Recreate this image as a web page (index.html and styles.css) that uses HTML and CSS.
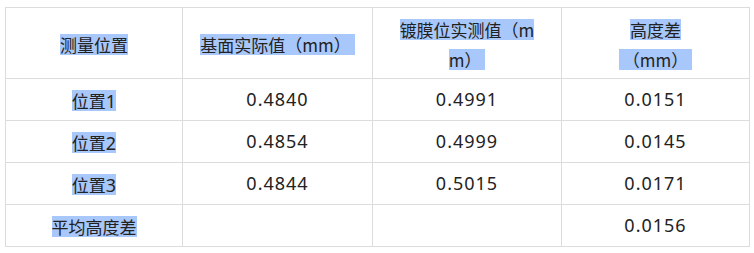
FILE: index.html
```html
<!DOCTYPE html>
<html lang="zh-CN">
<head>
<meta charset="utf-8">
<title>高度差测量</title>
<link rel="stylesheet" href="styles.css">
</head>
<body>
<table class="grid">
  <colgroup>
    <col class="c1"><col class="c2"><col class="c3"><col class="c4">
  </colgroup>
  <thead>
    <tr class="head">
      <th><span class="hl">测量位置</span></th>
      <th><span class="hl">基面实际值（mm）&nbsp;</span></th>
      <th><span class="hl">镀膜位实测值（m</span><br><span class="hl">m）&nbsp;</span></th>
      <th><span class="hl">高度差</span><br><span class="hl">&nbsp;（mm）&nbsp;</span></th>
    </tr>
  </thead>
  <tbody>
    <tr>
      <td><span class="hl">位置<span class="num">1</span></span></td>
      <td class="num">0.4840</td>
      <td class="num">0.4991</td>
      <td class="num">0.0151</td>
    </tr>
    <tr>
      <td><span class="hl">位置<span class="num">2</span></span></td>
      <td class="num">0.4854</td>
      <td class="num">0.4999</td>
      <td class="num">0.0145</td>
    </tr>
    <tr>
      <td><span class="hl">位置<span class="num">3</span></span></td>
      <td class="num">0.4844</td>
      <td class="num">0.5015</td>
      <td class="num">0.0171</td>
    </tr>
    <tr>
      <td><span class="hl">平均高度差</span></td>
      <td></td>
      <td></td>
      <td class="num">0.0156</td>
    </tr>
  </tbody>
</table>
</body>
</html>
```
FILE: styles.css
```css
html, body {
  margin: 0;
  background: #ffffff;
}
body {
  padding: 7px 0 0 5px;
  font-family: "Noto Sans", "Noto Sans CJK SC", sans-serif;
  font-size: 17px;
  color: #222222;
}
.grid {
  border-collapse: collapse;
  table-layout: fixed;
  width: 744px;
}
.c1 { width: 177px; }
.c2 { width: 190px; }
.c3 { width: 189px; }
.c4 { width: 188px; }
.grid th,
.grid td {
  border: 1px solid #dcdcdc;
  padding: 0;
  text-align: center;
  vertical-align: middle;
  font-weight: normal;
}
.head th {
  height: 70px;
  line-height: 30px;
}
.grid tbody td {
  height: 41px;
  line-height: 21px;
}
.hl {
  display: inline-block;
  height: 21px;
  line-height: 21px;
  background: #a8c7fa;
  vertical-align: middle;
  font-family: "Noto Sans CJK SC", sans-serif;
}
.num {
  font-family: "Noto Sans", sans-serif;
  font-size: 18px;
  letter-spacing: 1px;
}
.hl .num {
  letter-spacing: 0;
}
```
